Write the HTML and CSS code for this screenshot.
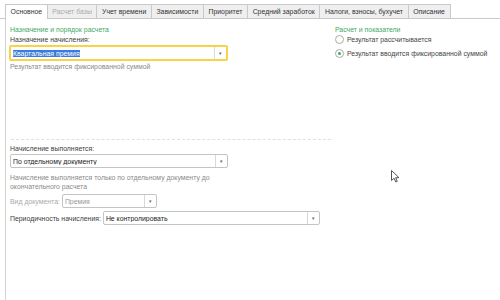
FILE: index.html
```html
<!DOCTYPE html>
<html lang="ru">
<head>
    <meta charset="UTF-8">
    <title>Начисление</title>
    <link rel="stylesheet" href="styles.css">
</head>
<body>
    <div class="tabs">
        <div class="tab active">Основное</div>
        <div class="tab disabled">Расчет базы</div>
        <div class="tab">Учет времени</div>
        <div class="tab">Зависимости</div>
        <div class="tab">Приоритет</div>
        <div class="tab">Средний заработок</div>
        <div class="tab">Налоги, взносы, бухучет</div>
        <div class="tab">Описание</div>
    </div>

    <div class="page">
        <div class="top">
            <div class="group left">
                <div class="title">Назначение и порядок расчета</div>
                <div class="label">Назначение начисления:</div>
                <div class="field focused wide">
                    <span class="value"><span class="selected">Квартальная премия</span></span>
                    <span class="drop">▾</span>
                </div>
                <div class="note">Результат вводится фиксированной суммой</div>
            </div>
            <div class="group right">
                <div class="title">Расчет и показатели</div>
                <label class="radio"><span class="dot"></span>Результат рассчитывается</label>
                <label class="radio"><span class="dot on"></span>Результат вводится фиксированной суммой</label>
            </div>
        </div>

        <div class="sep"></div>

        <div class="bottom">
            <div class="label">Начисление выполняется:</div>
            <div class="field wide">
                <span class="value">По отдельному документу</span>
                <span class="drop">▾</span>
            </div>
            <div class="note para">Начисление выполняется только по отдельному документу до окончательного расчета</div>
            <div class="row">
                <span class="label inline muted">Вид документа:</span>
                <div class="field small off">
                    <span class="value">Премия</span>
                    <span class="drop">▾</span>
                </div>
            </div>
            <div class="row">
                <span class="label inline">Периодичность начисления:</span>
                <div class="field period">
                    <span class="value">Не контролировать</span>
                    <span class="drop">▾</span>
                </div>
            </div>
        </div>
    </div>

    <svg class="cursor" width="9" height="13" viewBox="0 0 9 13">
        <path d="M0.5 0.5 L0.5 10.5 L3 8.2 L4.8 12 L6.3 11.3 L4.6 7.7 L8 7.7 Z" fill="#fff" stroke="#555" stroke-width="1"/>
    </svg>
</body>
</html>
```
FILE: styles.css
```css
:root {
    --green: #3fa966;
    --border: #c9c9c9;
    --text: #404040;
    --muted: #8a8a8a;
}

body {
    margin: 0;
    width: 500px;
    height: 300px;
    overflow: hidden;
    background: #fff;
    font-family: 'Liberation Sans', Arial, sans-serif;
    font-size: 6.9px;
    color: var(--text);
    position: relative;
}

.tabs {
    display: flex;
    padding: 4px 0 0 5px;
    border-bottom: 1px solid var(--border);
}

.tab {
    height: 13px;
    line-height: 13px;
    padding: 0 4.6px;
    background: #efefef;
    border: 1px solid var(--border);
    border-bottom: none;
    margin-right: -1px;
    color: #333;
}

.tab.active {
    background: #fff;
    margin-bottom: -1px;
    height: 14px;
}

.tab.disabled {
    color: #aaa;
}

.page {
    margin-left: 5px;
    border-left: 1px solid #d4d4d4;
    height: 281px;
    padding: 6px 0 0 4px;
}

.top {
    display: flex;
    height: 114px;
}

.group.left {
    width: 325px;
}

.title {
    color: var(--green);
    height: 9px;
    line-height: 9px;
    margin-bottom: 1px;
}

.label {
    line-height: 9px;
    height: 9px;
}

.label.inline {
    margin-right: 2px;
}

.muted {
    color: #aaa;
}

.field {
    display: flex;
    align-items: center;
    height: 12px;
    border: 1px solid #c4c4c4;
    border-radius: 2px;
    background: #fff;
    color: #222;
}

.field.wide {
    width: 216px;
    margin-top: 1px;
}

.field.focused {
    border: 2px solid #f6d34a;
    width: 215px;
    margin-left: -1px;
}

.field.small {
    width: 93px;
}

.field.period {
    width: 215px;
}

.field.off .value {
    color: #999;
}

.value {
    flex: 1;
    padding-left: 2px;
    white-space: nowrap;
    overflow: hidden;
}

.selected {
    background: #3a7bdc;
    color: #fff;
}

.drop {
    width: 11px;
    height: 100%;
    border-left: 1px solid #d8d8d8;
    color: #666;
    font-size: 5px;
    display: flex;
    align-items: center;
    justify-content: center;
}

.note {
    color: var(--muted);
    margin-top: 1px;
    line-height: 9px;
}

.note.para {
    width: 225px;
    margin-top: 6px;
    line-height: 8.5px;
}

.radio {
    display: flex;
    align-items: center;
    height: 9px;
    margin-bottom: 5px;
    color: #444;
}

.dot {
    width: 7px;
    height: 7px;
    border: 1px solid #aaa;
    border-radius: 50%;
    margin-right: 3px;
    display: flex;
    align-items: center;
    justify-content: center;
}

.dot.on::after {
    content: '';
    width: 3px;
    height: 3px;
    border-radius: 50%;
    background: var(--green);
}

.sep {
    width: 320px;
    margin-left: 1px;
    border-top: 1px dashed #e0e0e0;
    margin-bottom: 4px;
}

.bottom .label:first-child {
    margin-top: 1px;
}

.row {
    display: flex;
    align-items: center;
    margin-top: 3px;
}

.cursor {
    position: absolute;
    left: 391px;
    top: 170px;
}
```
